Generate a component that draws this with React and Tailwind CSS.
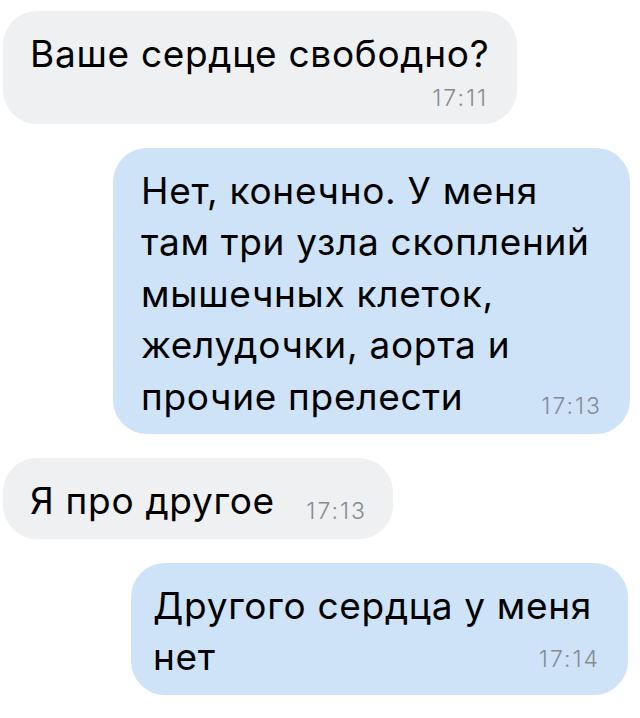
export default function App() {
  const timeCls = "font-light text-[23px] leading-[26px] text-[#868b92] tracking-[2px] whitespace-nowrap";
  return (
    <div className="min-h-screen bg-white pt-[11px] pl-[3px] pr-[10px] flex flex-col gap-[24px] font-['Inter','Liberation_Sans',sans-serif] text-black whitespace-nowrap">
      {/* incoming */}
      <div className="self-start w-[514px] rounded-[34px] bg-[#eef0f2] pt-[17px] pb-[13px] pl-[27px] pr-[29px]">
        <p className="text-[37px] leading-[51.5px] tracking-[0.7px]">Ваше сердце свободно?</p>
        <p className={`${timeCls} mt-[5px] text-right`}>17:11</p>
      </div>

      {/* outgoing */}
      <div className="self-end w-[517px] rounded-[34px] bg-[#cee3f8] pt-[17px] pb-[12px] pl-[28px] pr-[28px] text-[37px] leading-[51.5px] tracking-[0.7px]">
        <p>Нет, конечно. У меня</p>
        <p>там три узла скоплений</p>
        <p>мышечных клеток,</p>
        <p>желудочки, аорта и</p>
        <div className="flex items-end justify-between">
          <span>прочие прелести</span>
          <span className={`${timeCls} mb-[3px]`}>17:13</span>
        </div>
      </div>

      <div className="self-start w-[390px] rounded-[34px] bg-[#eef0f2] pt-[17px] pb-[12px] pl-[27px] pr-[26px] flex items-end justify-between">
        <span className="text-[37px] leading-[51.5px] tracking-[0.7px]">Я про другое</span>
        <span className={`${timeCls} mb-[3px]`}>17:13</span>
      </div>

      <div className="self-end mr-[2px] w-[497px] rounded-[34px] bg-[#cee3f8] pt-[17px] pb-[12px] pl-[22px] pr-[28px] text-[37px] leading-[51.5px] tracking-[0.7px]">
        <p>Другого сердца у меня</p>
        <div className="flex items-end justify-between">
          <span>нет</span>
          <span className={`${timeCls} mb-[11px]`}>17:14</span>
        </div>
      </div>
    </div>
  );
}
